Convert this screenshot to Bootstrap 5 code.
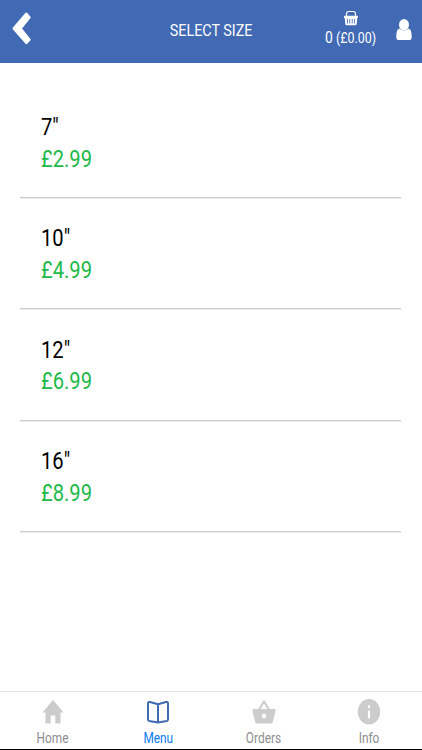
<!DOCTYPE html>
<html lang="en">
<head>
<meta charset="utf-8">
<meta name="viewport" content="width=device-width, initial-scale=1">
<title>Select size</title>
<link href="https://cdn.jsdelivr.net/npm/bootstrap@5.3.0/dist/css/bootstrap.min.css" rel="stylesheet">
<style>
body{font-family:Roboto,"Liberation Sans",sans-serif;height:750px;overflow:hidden;background:#fff}
.topbar{height:62.5px;background:#4169b4;color:#fff}
.side{width:120px}
.cond{display:inline-block;transform:scaleX(.84);white-space:nowrap}
.cond-start{transform-origin:left center}
.heading{font-size:16.7px;line-height:20px;transform:scaleX(.86)}
.back{margin-left:12px;margin-top:-6px}
.cart{width:64px;margin-top:10px;margin-right:13px}
.total{font-size:16.5px;line-height:20px;margin-top:2px}
.total small{font-size:14.8px}
.user{margin:18px 10px 0 0}
.sizes{padding:24px 21px 0 20px}
.size-item{height:111.4px;padding:25.6px 21px 0;border-bottom:1px solid #ccc;box-shadow:0 1px #ececec;font-size:24px;line-height:31.5px;color:#000}
.price{color:#22b94b}
.tabs{height:59px;border-top:1px solid #e4e4e4;border-bottom:1px solid #000;background:#fff}
.tab{color:#8e8e93;font-size:13.8px;line-height:16px;padding-top:7px}
.tab svg{display:block;margin-bottom:4px;color:#ccc}
.tab .cond{transform:scaleX(.86)}
.tab.active{color:#087bf0}
.tab.active svg{color:#4169b4}
</style>
<script src="https://cdn.jsdelivr.net/npm/bootstrap@5.3.0/dist/js/bootstrap.bundle.min.js"></script>
</head>
<body class="d-flex flex-column">
<header class="topbar d-flex justify-content-between flex-shrink-0">
  <div class="side d-flex align-items-center">
    <svg class="back" width="20" height="33" viewBox="0 0 20 33" fill="#fff" stroke="#fff" stroke-width="2" stroke-linejoin="round"><path d="M14.300 1.500 1.500 16.500 14.300 31.200 17.700 27.600 8.700 16.500 17.700 5.400Z"/></svg>
  </div>
  <div class="d-flex align-items-center"><span class="cond heading">SELECT SIZE</span></div>
  <div class="side d-flex justify-content-end">
    <div class="cart d-flex flex-column align-items-center flex-shrink-0">
      <svg width="14" height="16" viewBox="0 0 14 16"><path d="M2.5 6.5V3.8Q2.5 1.5 4.8 1.5h4.4q2.3 0 2.3 2.3v2.7" fill="none" stroke="#fff" stroke-width="1.2"/><path fill="#fff" fill-rule="evenodd" d="M.7 5.7h12.6q.7 0 .7.7v1.1q0 .6-.7.6L12.7 14q-.1 1.3-1.3 1.3H2.6Q1.4 15.3 1.3 14L.7 8.100Q0 8.100 0 7.500V6.400Q0 5.700.7 5.700ZM3 9l.3 4.500h.8L3.800 9ZM5.400 9v4.500h.8V9ZM7.800 9v4.500h.8V9ZM10.200 9l-.3 4.500h.8L11 9Z"/></svg>
      <span class="cond total">0 <small>(£0.00)</small></span>
    </div>
    <svg class="user flex-shrink-0" width="16" height="23" viewBox="0 0 16 23" fill="#fff"><ellipse cx="8" cy="6.700" rx="5" ry="5.700"/><path d="M3.500 10.500Q8 14.500 12.500 10.500C15 11.500 15.700 14 15.700 19.500Q15.700 22 13.500 22H2.500Q.3 22 .3 19.500C.3 14 1 11.500 3.500 10.500Z"/></svg>
  </div>
</header>
<main class="sizes flex-grow-1">
  <div class="size-item"><div><span class="cond cond-start">7"</span></div><div class="price"><span class="cond cond-start">£2.99</span></div></div>
  <div class="size-item"><div><span class="cond cond-start">10"</span></div><div class="price"><span class="cond cond-start">£4.99</span></div></div>
  <div class="size-item"><div><span class="cond cond-start">12"</span></div><div class="price"><span class="cond cond-start">£6.99</span></div></div>
  <div class="size-item"><div><span class="cond cond-start">16"</span></div><div class="price"><span class="cond cond-start">£8.99</span></div></div>
</main>
<nav class="tabs row g-0 flex-shrink-0">
  <div class="tab col d-flex flex-column align-items-center">
    <svg width="24" height="27" viewBox="0 0 24 27" fill="currentColor"><path d="M12 1 22.500 13.500H19.500V24.500H14.300V16.500H9.700V24.500H4.500V13.500H1.500Z"/></svg><span class="cond">Home</span>
  </div>
  <div class="tab active col d-flex flex-column align-items-center">
    <svg width="24" height="27" viewBox="0 0 24 27" fill="none" stroke="currentColor" stroke-width="2" stroke-linejoin="round"><path d="M12 5.300 4 3Q2 2.500 2 4.500V20.500Q2 21.700 3.200 22L12 23.500 20.800 22Q22 21.700 22 20.500V4.500Q22 2.500 20 3ZM12 5.300V23.500"/></svg><span class="cond">Menu</span>
  </div>
  <div class="tab col d-flex flex-column align-items-center">
    <svg width="24" height="27" viewBox="0 0 24 27" fill="currentColor"><path fill-rule="evenodd" d="M.5 10H6.300L11 2Q12 .5 13 2L17.700 10H23.500V12.500L20.800 23Q20.400 24.500 19 24.500H5Q3.600 24.500 3.200 23L.5 12.500ZM8.600 10H15.400L12 4.300ZM12 14.800a2.100 2.400 0 1 0 0 4.800a2.100 2.400 0 1 0 0-4.800Z"/></svg><span class="cond">Orders</span>
  </div>
  <div class="tab col d-flex flex-column align-items-center">
    <svg width="24" height="27" viewBox="0 0 24 27" fill="currentColor"><path fill-rule="evenodd" d="M12 0a11.200 12.800 0 1 0 0 25.600a11.200 12.800 0 1 0 0-25.600ZM10.900 6.300H13.100V8.900H10.900ZM10.900 11.500H13.100V19.500H10.900Z"/></svg><span class="cond">Info</span>
  </div>
</nav>
</body>
</html>
